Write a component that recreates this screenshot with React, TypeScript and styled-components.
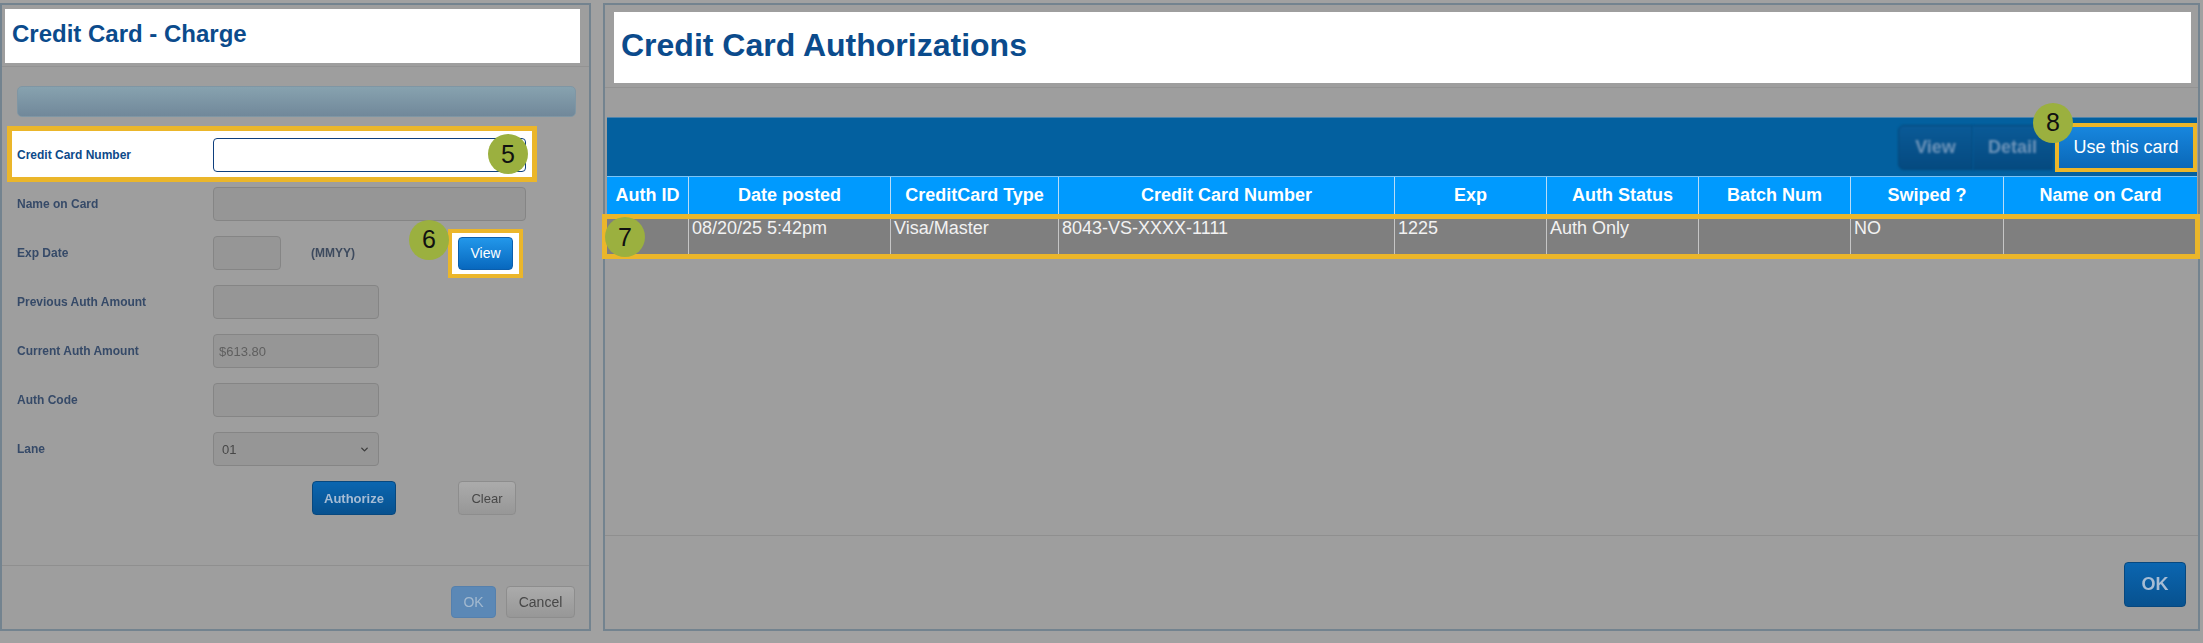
import React from 'react';
import styled, { createGlobalStyle, css } from 'styled-components';
import { ChevronDown } from 'lucide-react';

const GlobalStyle = createGlobalStyle`
    * { box-sizing: border-box; }
    html, body {
        margin: 0;
        padding: 0;
        background: #a1a1a1;
    }
    body {
        font-family: 'Liberation Sans', Arial, Helvetica, sans-serif;
        overflow: hidden;
    }
`;

// content sitting behind the tutorial overlay is a little soft
const soft = css`
    filter: blur(0.6px);
`;

const Page = styled.div`
    display: flex;
    align-items: flex-start;
    gap: 12px;
    padding: 3px 3px 0 0;
`;

const Panel = styled.section<{ $width?: number }>`
    display: flex;
    flex-direction: column;
    flex: ${(p) => (p.$width ? '0 0 auto' : '1 1 auto')};
    width: ${(p) => (p.$width ? `${p.$width}px` : 'auto')};
    height: 628px;
    border: 2px solid #73838f;
    background: #9e9e9e;
`;

const PanelHead = styled.header<{ $big?: boolean }>`
    padding: ${(p) => (p.$big ? '7px 7px 4px 9px' : '4px 9px 3px 3px')};
    border-bottom: 1px solid #939393;
`;

const Title = styled.h1<{ $big?: boolean }>`
    margin: 0;
    height: ${(p) => (p.$big ? 71 : 54)}px;
    padding: ${(p) => (p.$big ? '15px 0 0 7px' : '11px 0 0 7px')};
    background: #fff;
    color: #0b4b8c;
    font-size: ${(p) => (p.$big ? 32 : 24)}px;
    line-height: ${(p) => (p.$big ? 36 : 28)}px;
    font-weight: 700;
    white-space: nowrap;
`;

const Body = styled.div<{ $pad: string }>`
    flex: 1;
    display: flex;
    flex-direction: column;
    padding: ${(p) => p.$pad};
`;

const InfoBar = styled.div`
    height: 31px;
    border-radius: 5px;
    border: 1px solid #7f96a4;
    background: linear-gradient(#87a2af, #71889a);
    ${soft}
`;

const FormRow = styled.div<{ $gap?: number }>`
    display: flex;
    align-items: center;
    height: 34px;
    margin-top: ${(p) => p.$gap ?? 15}px;
`;

const HighlightRow = styled(FormRow)`
    position: relative;
    align-self: flex-start;
    height: auto;
    margin: 9px 0 0 -10px;
    padding: 7px 6px 5px 5px;
    border: 5px solid #ebb62a;
    background: #fff;
`;

const Label = styled.label<{ $active?: boolean }>`
    flex: 0 0 196px;
    font-size: 12px;
    font-weight: 700;
    color: ${(p) => (p.$active ? '#0d4a89' : '#364a68')};
    ${(p) => !p.$active && soft}
`;

const Input = styled.input<{ $w: number; $active?: boolean }>`
    width: ${(p) => p.$w}px;
    height: 34px;
    padding: 0 5px;
    border-radius: 4px;
    border: 1px solid ${(p) => (p.$active ? '#0e3f7e' : '#858585')};
    background: ${(p) => (p.$active ? '#fff' : '#969696')};
    font-family: inherit;
    font-size: 13px;
    color: #5f5f5f;
    outline: none;
    ${(p) => !p.$active && soft}
`;

const Hint = styled.span`
    margin-left: 30px;
    font-size: 12px;
    font-weight: 700;
    color: #3d4a5e;
    ${soft}
`;

const SelectWrap = styled.div`
    position: relative;
    width: 166px;
    height: 34px;
    ${soft}

    svg {
        position: absolute;
        right: 9px;
        top: 12px;
        color: #3c3c3c;
    }
`;

const Select = styled.select`
    appearance: none;
    width: 100%;
    height: 100%;
    padding: 0 8px;
    border-radius: 4px;
    border: 1px solid #858585;
    background: #969696;
    font-family: inherit;
    font-size: 13px;
    color: #474747;
`;

const HighlightBox = styled.div<{ $ml?: number }>`
    position: relative;
    margin-left: ${(p) => p.$ml ?? 0}px;
    padding: 4px 6px;
    border: 4px solid #ebb62a;
    background: #fff;
`;

const Button = styled.button<{ $variant: 'blue' | 'dimBlue' | 'paleBlue' | 'gray'; $w: number; $h: number; $bold?: boolean; $size?: number }>`
    width: ${(p) => p.$w}px;
    height: ${(p) => p.$h}px;
    padding: 0;
    border-radius: 4px;
    font-family: inherit;
    font-size: ${(p) => p.$size ?? 13}px;
    font-weight: ${(p) => (p.$bold ? 700 : 400)};
    cursor: pointer;
    ${(p) =>
        p.$variant === 'blue' &&
        css`
            border: 1px solid #0b5eac;
            background: linear-gradient(#2297ea, #0868be);
            color: #fff;
        `}
    ${(p) =>
        p.$variant === 'dimBlue' &&
        css`
            border: 1px solid #07487f;
            background: linear-gradient(#0b66b0, #07518f);
            color: #a6bcd4;
            ${soft}
        `}
    ${(p) =>
        p.$variant === 'paleBlue' &&
        css`
            border: 1px solid #5580ad;
            background: #5b88b6;
            color: #a3b9cf;
            ${soft}
        `}
    ${(p) =>
        p.$variant === 'gray' &&
        css`
            border: 1px solid #8d8d8d;
            background: linear-gradient(#ababab, #979797);
            color: #474747;
            ${soft}
        `}
`;

const ButtonRow = styled.div`
    display: flex;
    gap: 62px;
    margin-top: 15px;
    padding-left: 295px;
`;

const Footer = styled.footer<{ $pad: string }>`
    display: flex;
    justify-content: flex-end;
    gap: 10px;
    padding: ${(p) => p.$pad};
    border-top: 1px solid #8f8f8f;
`;

const Badge = styled.span<{ $top: number; $left: number }>`
    position: absolute;
    top: ${(p) => p.$top}px;
    left: ${(p) => p.$left}px;
    z-index: 3;
    width: 40px;
    height: 40px;
    border-radius: 50%;
    background: #9bb03f;
    color: #111;
    font-size: 25px;
    line-height: 1;
    display: flex;
    align-items: center;
    justify-content: center;
`;

const Toolbar = styled.div`
    display: flex;
    justify-content: flex-end;
    align-items: center;
    height: 59px;
    background: #03609f;
    border-top: 1px solid #4c84ae;
`;

const GroupButton = styled.button<{ $w: number; $first?: boolean }>`
    width: ${(p) => p.$w}px;
    height: 45px;
    padding: 0;
    border: 1px solid #044678;
    border-left-width: ${(p) => (p.$first ? 1 : 0)}px;
    border-radius: ${(p) => (p.$first ? '6px 0 0 6px' : '0')};
    background: linear-gradient(#0a5a97, #054a80);
    color: #6f95ba;
    font-family: inherit;
    font-size: 18px;
    font-weight: 700;
    filter: blur(0.9px);
`;

const UseBox = styled.div`
    position: relative;
    margin-left: 2px;
    border: 4px solid #ebb62a;
`;

const UseButton = styled.button`
    display: block;
    width: 134px;
    height: 41px;
    padding: 0;
    border: none;
    background: linear-gradient(#1786de, #0a68b8);
    color: #fff;
    font-family: inherit;
    font-size: 18px;
`;

const GRID = '81px 202px 168px 336px 152px 152px 152px 153px 194px';

const HeadRow = styled.div`
    display: grid;
    grid-template-columns: ${GRID};
    height: 38px;
    border-top: 1px solid #7cc4f5;
    background: #009afe;
`;

const HeadCell = styled.div`
    display: flex;
    align-items: center;
    justify-content: center;
    color: #fff;
    font-size: 18px;
    font-weight: 700;
    white-space: nowrap;

    & + & {
        border-left: 1px solid #b7dcf8;
    }
`;

const DataRow = styled.div`
    position: relative;
    display: grid;
    grid-template-columns: ${GRID};
    height: 44px;
    background: #7f7f7f;

    &::after {
        content: '';
        position: absolute;
        inset: 0 -3px -1px -5px;
        border: 5px solid #ebb62a;
        pointer-events: none;
    }
`;

const DataCell = styled.div`
    padding: 4px 3px;
    color: #f2f2f2;
    font-size: 18px;
    line-height: 21px;
    white-space: nowrap;

    & + & {
        border-left: 1px solid #c6c6c6;
    }
`;

const columns = [
    'Auth ID',
    'Date posted',
    'CreditCard Type',
    'Credit Card Number',
    'Exp',
    'Auth Status',
    'Batch Num',
    'Swiped ?',
    'Name on Card',
];

const row = ['', '08/20/25 5:42pm', 'Visa/Master', '8043-VS-XXXX-1111', '1225', 'Auth Only', '', 'NO', ''];

const ChargePanel = () => (
    <Panel $width={591}>
        <PanelHead>
            <Title>Credit Card - Charge</Title>
        </PanelHead>
        <Body $pad='19px 13px 0 15px'>
            <InfoBar />
            <HighlightRow>
                <Label $active>Credit Card Number</Label>
                <Input $w={313} $active />
                <Badge $top={3} $left={476}>5</Badge>
            </HighlightRow>
            <FormRow $gap={5}>
                <Label>Name on Card</Label>
                <Input $w={313} />
            </FormRow>
            <FormRow>
                <Label>Exp Date</Label>
                <Input $w={68} />
                <Hint>(MMYY)</Hint>
                <HighlightBox $ml={93}>
                    <Badge $top={-13} $left={-43}>6</Badge>
                    <Button $variant='blue' $w={55} $h={33} $size={14}>
                        View
                    </Button>
                </HighlightBox>
            </FormRow>
            <FormRow>
                <Label>Previous Auth Amount</Label>
                <Input $w={166} />
            </FormRow>
            <FormRow>
                <Label>Current Auth Amount</Label>
                <Input $w={166} defaultValue='$613.80' />
            </FormRow>
            <FormRow>
                <Label>Auth Code</Label>
                <Input $w={166} />
            </FormRow>
            <FormRow>
                <Label>Lane</Label>
                <SelectWrap>
                    <Select defaultValue='01'>
                        <option value='01'>01</option>
                    </Select>
                    <ChevronDown size={11} strokeWidth={3} />
                </SelectWrap>
            </FormRow>
            <ButtonRow>
                <Button $variant='dimBlue' $w={84} $h={34} $bold>
                    Authorize
                </Button>
                <Button $variant='gray' $w={58} $h={34}>
                    Clear
                </Button>
            </ButtonRow>
        </Body>
        <Footer $pad='20px 14px 11px 0'>
            <Button $variant='paleBlue' $w={45} $h={32} $size={14}>
                OK
            </Button>
            <Button $variant='gray' $w={69} $h={32} $size={14}>
                Cancel
            </Button>
        </Footer>
    </Panel>
);

const AuthorizationsPanel = () => (
    <Panel>
        <PanelHead $big>
            <Title $big>Credit Card Authorizations</Title>
        </PanelHead>
        <Body $pad='29px 1px 0 2px'>
            <Toolbar>
                <GroupButton $w={75} $first>
                    View
                </GroupButton>
                <GroupButton $w={80}>Detail</GroupButton>
                <UseBox>
                    <Badge $top={-24} $left={-26}>8</Badge>
                    <UseButton>Use this card</UseButton>
                </UseBox>
            </Toolbar>
            <HeadRow>
                {columns.map((c) => (
                    <HeadCell key={c}>{c}</HeadCell>
                ))}
            </HeadRow>
            <DataRow>
                <Badge $top={3} $left={-2}>7</Badge>
                {row.map((v, i) => (
                    <DataCell key={i}>{v}</DataCell>
                ))}
            </DataRow>
        </Body>
        <Footer $pad='26px 12px 22px 0'>
            <Button $variant='dimBlue' $w={62} $h={45} $size={18} $bold>
                OK
            </Button>
        </Footer>
    </Panel>
);

const App = () => (
    <>
        <GlobalStyle />
        <Page>
            <ChargePanel />
            <AuthorizationsPanel />
        </Page>
    </>
);

export default App;
